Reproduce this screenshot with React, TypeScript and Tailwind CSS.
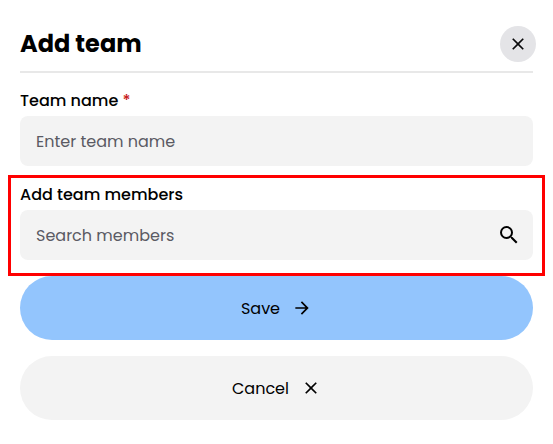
import { MdArrowForward, MdClose, MdSearch } from "react-icons/md";

export default function App() {
  return (
    <main className="h-[444px] w-[553px] bg-white px-5 pt-[26px] text-base text-black [font-family:Poppins,Inter,sans-serif]">
      <header className="-mr-[3px] flex h-9 items-center justify-between">
        <h1 className="text-2xl leading-9 font-bold">Add team</h1>
        <button aria-label="Close" className="flex size-9 items-center justify-center rounded-full bg-[#e4e4e7] text-[#09090b]">
          <MdClose size={20} />
        </button>
      </header>
      <div className="mt-[9px] h-0.5 w-[513px] bg-[#e8e8e8]" />
      <form>
        <div className="pt-4">
          <label htmlFor="name" className="block h-6 leading-6 font-medium">
            Team name <span className="text-[#c81e1e]">*</span>
          </label>
          <input id="name" placeholder="Enter team name" className="mt-[3px] block h-[50px] w-[513px] rounded-lg bg-[#f3f3f3] px-4 placeholder:text-[#5a5a63]" />
        </div>
        <section className="-ml-3 mt-[9px] h-[101px] w-[537px] border-[3px] border-[#ff0000] px-[9px] pt-[5px]">
          <label htmlFor="members" className="block h-6 leading-6 font-medium">
            Add team members
          </label>
          <div className="mt-[3px] flex h-[50px] w-[513px] items-center rounded-lg bg-[#f3f3f3] pr-3 pl-4">
            <input id="members" placeholder="Search members" className="h-full min-w-0 flex-1 bg-transparent pt-px placeholder:text-[#5a5a63]" />
            <MdSearch size={24} />
          </div>
        </section>
        <button type="button" className="flex h-16 w-[513px] items-center justify-center gap-3 rounded-full bg-[#93c5fd]">
          <span className="pt-0.5">Save</span>
          <MdArrowForward size={20} />
        </button>
        <button type="button" className="mt-4 flex h-16 w-[513px] items-center justify-center gap-3 rounded-full bg-[#f3f3f3]">
          <span className="pt-0.5">Cancel</span>
          <MdClose size={20} />
        </button>
      </form>
    </main>
  );
}
